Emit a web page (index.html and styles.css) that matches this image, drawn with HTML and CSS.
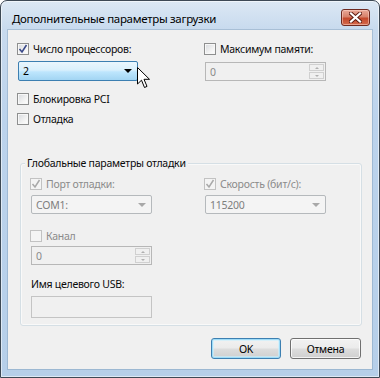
FILE: index.html
```html
<!DOCTYPE html>
<html lang="ru">
<head>
<meta charset="utf-8">
<title>Дополнительные параметры загрузки</title>
<link rel="stylesheet" href="styles.css">
</head>
<body>
<div class="window">
  <div class="titlebar">
    <span class="title">Дополнительные параметры загрузки</span>
    <span class="close">
      <svg width="13" height="11" viewBox="0 0 13 11"><path d="M2 1.5 L11 9.5 M11 1.5 L2 9.5" stroke="#5a1a10" stroke-width="4" stroke-linecap="square"/><path d="M2 1.5 L11 9.5 M11 1.5 L2 9.5" stroke="#fff" stroke-width="2.2" stroke-linecap="square"/></svg>
    </span>
  </div>
  <div class="client">
    <div class="top">
      <div class="col">
        <div class="cb"><span class="box"><svg width="10" height="10" viewBox="0 0 10 10"><path d="M1.5 5 L4 8 L8.5 1" fill="none" stroke="#3b4a8a" stroke-width="1.6"/></svg></span>Число процессоров:</div>
        <div class="combo hot c-top"><span>2</span><span class="arrow"></span></div>
        <div class="cb m-pci"><span class="box"></span>Блокировка PCI</div>
        <div class="cb m-dbg"><span class="box"></span>Отладка</div>
      </div>
      <div class="col">
        <div class="cb"><span class="box"></span>Максимум памяти:</div>
        <div class="spin dis s-top"><span>0</span><span class="spinbtns"><span class="sb up"></span><span class="sb down"></span></span></div>
      </div>
    </div>
    <div class="group">
      <div class="legend">Глобальные параметры отладки</div>
      <div class="grow">
        <div class="col">
          <div class="cb dis"><span class="box"><svg width="10" height="10" viewBox="0 0 10 10"><path d="M1.5 5 L4 8 L8.5 1" fill="none" stroke="#a9a9a9" stroke-width="1.5"/></svg></span>Порт отладки:</div>
          <div class="combo dis g-combo"><span>COM1:</span><span class="arrow"></span></div>
          <div class="cb dis m-kanal"><span class="box"></span>Канал</div>
          <div class="spin dis g-spin"><span>0</span><span class="spinbtns"><span class="sb up"></span><span class="sb down"></span></span></div>
          <div class="lbl">Имя целевого USB:</div>
          <div class="textbox dis"></div>
        </div>
        <div class="col">
          <div class="cb dis"><span class="box"><svg width="10" height="10" viewBox="0 0 10 10"><path d="M1.5 5 L4 8 L8.5 1" fill="none" stroke="#a9a9a9" stroke-width="1.5"/></svg></span>Скорость (бит/с):</div>
          <div class="combo dis g-combo"><span>115200</span><span class="arrow"></span></div>
        </div>
      </div>
    </div>
    <div class="buttons">
      <div class="btn default">OK</div>
      <div class="btn">Отмена</div>
    </div>
  </div>
  <svg class="cursor" width="14" height="22" viewBox="0 0 14 22"><path d="M0.5 0.5 L0.5 17 L4.5 13.2 L7.5 20.5 L10 19.4 L7 12.3 L12.5 12.3 Z" fill="#fff" stroke="#000" stroke-width="1" stroke-linejoin="miter"/></svg>
</div>
</body>
</html>
```
FILE: styles.css
```css
* { box-sizing: border-box; }
html, body { margin: 0; padding: 0; background: #fff; }
body {
  font-family: "Noto Sans", "Open Sans", sans-serif;
  font-size: 10.5px;
  letter-spacing: -0.25px;
  color: #0a0a0a;
}
.window {
  position: relative;
  width: 380px;
  height: 378px;
  border: 1px solid #3d4955;
  border-radius: 7px 7px 0 0;
  background: linear-gradient(180deg, #dce8f4 0px, #c8daee 28px, #bcd3ec 120px, #b6cfe9 100%);
  box-shadow: inset 0 0 0 1px rgba(255,255,255,0.55);
  padding: 0 7px 8px 7px;
  display: flex;
  flex-direction: column;
  overflow: hidden;
}
.titlebar {
  height: 29px;
  display: flex;
  justify-content: space-between;
  align-items: flex-start;
  margin: 0 -7px;
}
.title {
  padding: 10px 0 0 11px;
  font-size: 11.5px;
  letter-spacing: -0.3px;
  line-height: 16px;
  color: #000;
}
.close {
  margin: 8px 9px 0 0;
  width: 29px;
  height: 17px;
  border: 1px solid #6e2a20;
  border-radius: 3px;
  background: linear-gradient(180deg, #e9a898 0%, #d7826c 45%, #c4482c 55%, #d36a4c 100%);
  box-shadow: inset 0 0 0 1px rgba(255,220,210,0.5);
  display: flex;
  align-items: center;
  justify-content: center;
}
.close svg { display: block; }
.client {
  height: 339px;
  background: #f0f0f0;
  box-shadow: 0 0 0 1px rgba(110,140,170,0.35);
  display: flex;
  flex-direction: column;
  padding: 13px 11px 0 10px;
}
.top {
  display: grid;
  grid-template-columns: 187px 1fr;
}
.col { display: flex; flex-direction: column; align-items: flex-start; }
.cb {
  display: flex;
  align-items: center;
  height: 12px;
  line-height: 12px;
  white-space: nowrap;
  margin-left: -1px;
}
.box {
  width: 12px;
  height: 12px;
  margin-right: 4px;
  border: 1px solid #8e8f8f;
  background: linear-gradient(135deg, #d6d9dd 0%, #f2f2f2 60%, #ffffff 100%);
  box-shadow: inset 0 0 0 1px #f7f7f7;
  display: flex;
  align-items: center;
  justify-content: center;
  flex: none;
}
.box svg { display: block; }
.cb.dis { color: #8b8b8b; }
.cb.dis .box {
  border-color: #c2c2c2;
  background: #f4f4f4;
  box-shadow: none;
}
.m-pci { margin-top: 12px; }
.m-dbg { margin-top: 8px; }
.combo {
  width: 120px;
  height: 20px;
  border: 1px solid #acb2b6;
  border-radius: 2px;
  display: flex;
  align-items: center;
  justify-content: space-between;
  padding: 0 5px 0 4px;
  line-height: 14px;
}
.combo.hot {
  border-color: #3c7fb1;
  background: linear-gradient(180deg, #eaf6fd 0%, #d9f0fc 45%, #bee6fd 55%, #a2d5f3 100%);
  color: #000;
}
.arrow {
  width: 0; height: 0;
  border-left: 4px solid transparent;
  border-right: 4px solid transparent;
  border-top: 4px solid #000;
}
.c-top { margin-top: 6px; }
.combo.dis {
  width: 121px;
  height: 19px;
  background: #f4f4f4;
  color: #7e7e7e;
  border-color: #b5b9bc;
}
.combo.dis .arrow { border-top-color: #a8a8a8; }
.spin {
  width: 121px;
  height: 19px;
  border: 1px solid #b7b7b7;
  background: #f0f0f0;
  color: #8a8a8a;
  display: flex;
  align-items: center;
  justify-content: space-between;
  padding: 0 1px 0 4px;
}
.s-top { margin-top: 7px; }
.spinbtns {
  display: flex;
  flex-direction: column;
  gap: 1px;
  height: 15px;
}
.sb {
  width: 15px;
  height: 7px;
  border: 1px solid #d0d0d0;
  background: #f0f0f0;
  display: flex;
  align-items: center;
  justify-content: center;
}
.sb::after {
  content: "";
  width: 0; height: 0;
  border-left: 2px solid transparent;
  border-right: 2px solid transparent;
}
.sb.up::after { border-bottom: 2px solid #b0b0b0; }
.sb.down::after { border-top: 2px solid #b0b0b0; }
.group {
  margin-top: 38px;
  margin-left: 2px;
  width: 342px;
  height: 163px;
  border: 1px solid #d5dfe5;
  border-radius: 3px;
  box-shadow: inset 0 0 0 1px rgba(255,255,255,0.6);
  padding: 0 0 0 10px;
  display: flex;
  flex-direction: column;
  align-items: flex-start;
}
.legend {
  margin: -8px 0 0 -6px;
  padding: 0 2px;
  background: #f0f0f0;
  line-height: 14px;
  white-space: nowrap;
}
.grow {
  margin-top: 8px;
  display: grid;
  grid-template-columns: 174px 1fr;
  width: 100%;
}
.g-combo { margin-top: 5px; }
.m-kanal { margin-top: 16px; }
.g-spin { margin-top: 4px; }
.lbl { margin-top: 12px; line-height: 14px; }
.textbox {
  margin-top: 5px;
  width: 121px;
  height: 22px;
  border: 1px solid #c4c4c4;
  background: #f0f0f0;
}
.buttons {
  margin-top: 12px;
  display: flex;
  justify-content: flex-end;
  gap: 9px;
}
.btn {
  width: 71px;
  height: 21px;
  border: 1px solid #707070;
  border-radius: 3px;
  background: linear-gradient(180deg, #f2f2f2 0%, #ebebeb 48%, #dddddd 52%, #cfcfcf 100%);
  box-shadow: inset 0 0 0 1px rgba(255,255,255,0.75);
  display: flex;
  align-items: center;
  justify-content: center;
  color: #000;
}
.btn.default {
  width: 70px;
  border-color: #3c7fb1;
  box-shadow: inset 0 0 0 1px #9fdcf8, inset 0 0 0 2px rgba(200,240,255,0.6);
}
.cursor {
  position: absolute;
  left: 136px;
  top: 66px;
}
```
